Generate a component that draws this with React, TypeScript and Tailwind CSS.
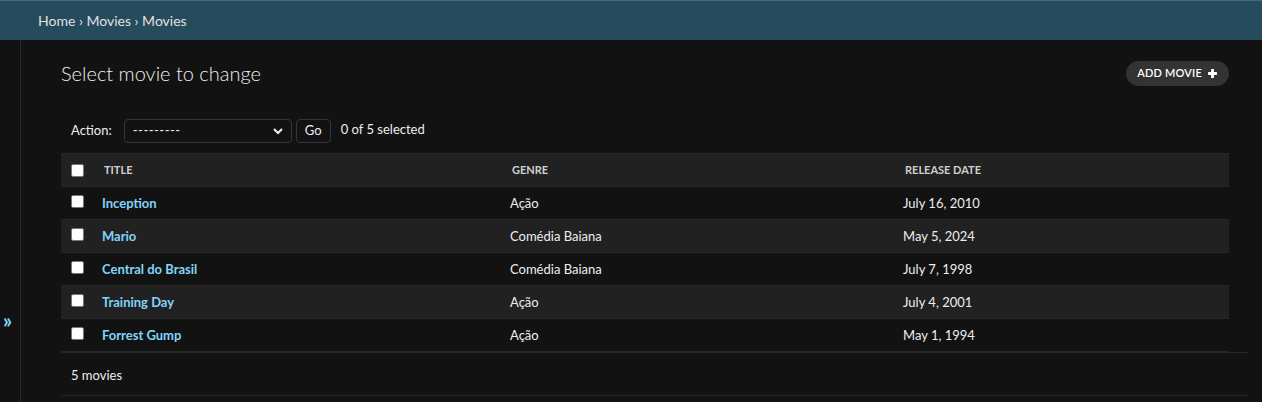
import React from "react";

const rows = [
  { title: "Inception", genre: "Ação", date: "July 16, 2010" },
  { title: "Mario", genre: "Comédia Baiana", date: "May 5, 2024" },
  { title: "Central do Brasil", genre: "Comédia Baiana", date: "July 7, 1998" },
  { title: "Training Day", genre: "Ação", date: "July 4, 2001" },
  { title: "Forrest Gump", genre: "Ação", date: "May 1, 1994" },
];

function Box() {
  return <span className="block w-[13px] h-[13px] bg-white rounded-[2px] border border-[#767676]" />;
}

export default function App() {
  return (
    <div className="w-[1262px] h-[402px] bg-[#121212] text-[#eeeeee] overflow-hidden flex flex-col" style={{ fontFamily: "Lato, 'Noto Sans', sans-serif" }}>
      <div className="h-[40px] shrink-0 bg-[#264b5d] border-t border-[#3f6b80] flex items-center pl-[38px] text-[14px] text-[#e0e0e0]">
        Home › Movies › Movies
      </div>
      <div className="flex flex-1">
        <div className="w-[21px] shrink-0 border-r border-[#2a2a2a] flex flex-col">
          <div className="h-[270px]" />
          <div className="text-[#81d4fa] text-[20px] font-bold leading-[20px] pl-[3px]">»</div>
        </div>
        <div className="flex-1 pl-[40px] pr-[14px]">
          <div className="mr-[19px] flex items-center justify-between mt-[21px] h-[25px]">
            <h1 className="text-[20px] font-light text-[#eeeeee] leading-[25px]">Select movie to change</h1>
            <button className="h-[25px] px-[11px] rounded-full bg-[#333333] text-white text-[11px] font-semibold flex items-center gap-[5px] tracking-[0.2px]">
              ADD MOVIE
              <svg width="11" height="11" viewBox="0 0 10 10"><path d="M5 1v8M1 5h8" stroke="white" strokeWidth="2.6" /></svg>
            </button>
          </div>
          <div className="mr-[19px] flex items-center h-[24px] mt-[33px] pl-[10px] text-[13px]">
            <span className="mr-[12px]">Action:</span>
            <div className="w-[168px] h-[24px] border border-[#353535] rounded-[4px] bg-[#121212] flex items-center justify-between px-[8px]">
              <span className="tracking-[0.5px]">---------</span>
              <svg width="10" height="7" viewBox="0 0 10 7"><path d="M1 1l4 4 4-4" stroke="#eee" strokeWidth="2" fill="none" /></svg>
            </div>
            <div className="ml-[4px] w-[35px] h-[24px] border border-[#353535] rounded-[4px] flex items-center justify-center">Go</div>
            <span className="ml-[10px] -mt-[3px]">0 of 5 selected</span>
          </div>
          <div className="mr-[19px] mt-[10px]">
            <div className="h-[34px] bg-[#212121] border-t border-[#212121] border-b border-[#272727] flex items-center text-[11px] font-bold text-[#d0d0d0] uppercase">
              <div className="w-[41px] pl-[10px]"><Box /></div>
              <div className="w-[408px] pl-[2px]">Title</div>
              <div className="w-[393px] pl-[2px]">Genre</div>
              <div className="pl-[2px]">Release date</div>
            </div>
            {rows.map((r, i) => (
              <div key={r.title} className={`h-[33px] flex items-center pt-[2px] text-[13px] border-b border-[#272727] ${i % 2 === 1 ? "bg-[#212121]" : "bg-[#121212]"}`}>
                <div className="w-[41px] pl-[10px] -mt-[5px]"><Box /></div>
                <div className="w-[408px] font-bold text-[#81d4fa]">{r.title}</div>
                <div className="w-[393px]">{r.genre}</div>
                <div>{r.date}</div>
              </div>
            ))}
          </div>
          <div className="border-t border-[#272727] h-[44px] flex items-center pt-[4px] pl-[10px] text-[13px] border-b">
            5 movies
          </div>
        </div>
      </div>
    </div>
  );
}
